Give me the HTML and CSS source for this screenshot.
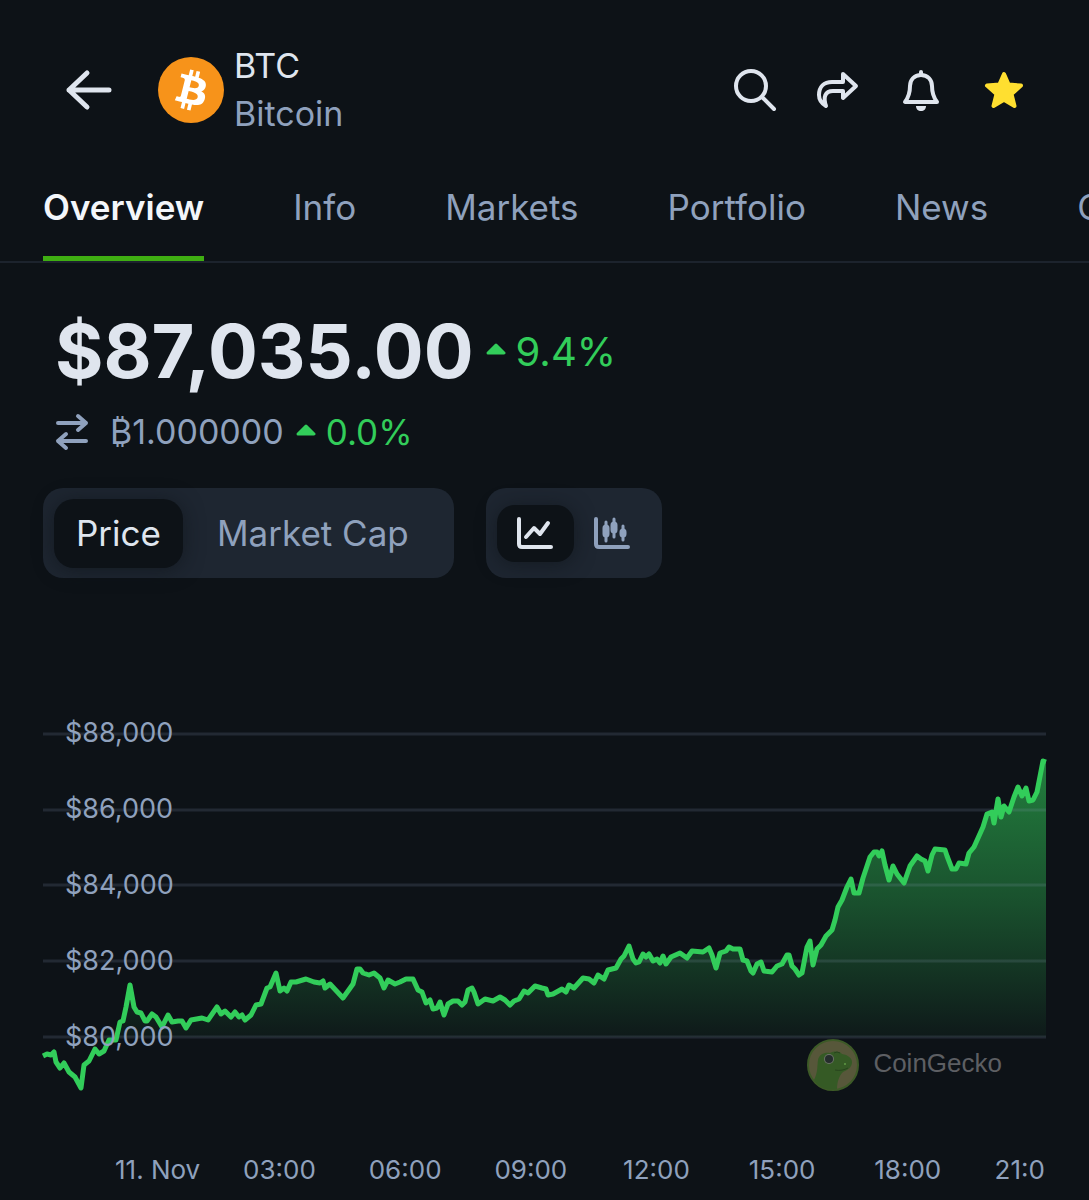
FILE: index.html
```html
<!DOCTYPE html>
<html lang="en">
<head>
<meta charset="utf-8">
<meta name="viewport" content="width=device-width, initial-scale=1">
<title>BTC – Bitcoin</title>
<link rel="stylesheet" href="styles.css">
</head>
<body>
<header class="topbar">
  <button class="icon-btn back" type="button" aria-label="Back">
    <svg width="48" height="44" viewBox="0 0 48 44" fill="none" stroke="currentColor" stroke-width="5" stroke-linecap="round" stroke-linejoin="round"><path d="M44 22H4M22 5 4 22l18 17"/></svg>
  </button>
  <svg class="coin-logo" viewBox="0 0 32 32" aria-hidden="true">
    <circle cx="16" cy="16" r="16" fill="#f7931a"/>
    <path fill="#fff" d="M23.189 14.02c.314-2.096-1.283-3.223-3.465-3.975l.708-2.84-1.728-.43-.69 2.765c-.454-.114-.92-.22-1.385-.326l.695-2.783L15.596 6l-.708 2.839c-.376-.086-.746-.17-1.104-.26l.002-.009-2.384-.595-.46 1.846s1.283.294 1.256.312c.7.175.826.638.805 1.006l-.806 3.235c.048.012.11.03.18.057l-.183-.045-1.13 4.532c-.086.212-.303.531-.793.41.018.025-1.256-.313-1.256-.313l-.858 1.978 2.25.561c.418.105.828.215 1.231.318l-.715 2.872 1.727.43.708-2.84c.472.127.93.245 1.378.357l-.706 2.828 1.728.43.715-2.866c2.948.558 5.164.333 6.097-2.333.752-2.146-.037-3.385-1.588-4.192 1.13-.26 1.98-1.003 2.207-2.538zm-3.95 5.538c-.533 2.147-4.148.986-5.32.695l.95-3.805c1.172.293 4.929.872 4.37 3.11zm.535-5.569c-.487 1.953-3.495.96-4.47.717l.86-3.45c.975.243 4.118.696 3.61 2.733z"/>
  </svg>
  <h1 class="coin-name"><span class="symbol">BTC</span><span class="name">Bitcoin</span></h1>
  <div class="actions">
    <button class="icon-btn" type="button" aria-label="Search">
      <svg width="44" height="44" viewBox="0 0 44 44" fill="none" stroke="currentColor" stroke-width="4" stroke-linecap="round"><circle cx="18" cy="18" r="15"/><path d="M30 30l11 11"/></svg>
    </button>
    <button class="icon-btn" type="button" aria-label="Share">
      <svg width="44" height="44" viewBox="0 0 44 44" fill="none" stroke="currentColor" stroke-width="4" stroke-linecap="round" stroke-linejoin="round"><path d="M27 6l13 12-13 12v-7H17C9 23 7 29 10 38 5 35 3 31 3 27c0-8 5-13 13-13h11z"/></svg>
    </button>
    <button class="icon-btn" type="button" aria-label="Alerts">
      <svg width="44" height="44" viewBox="0 0 44 44" fill="none" stroke="currentColor" stroke-width="4" stroke-linecap="round" stroke-linejoin="round"><path d="M22 4v3M22 7c-7 0-11 5-11 11 0 8-2 12-5 16h32c-3-4-5-8-5-16 0-6-4-11-11-11z"/><path d="M17 38h10c0 3-2 5-5 5s-5-2-5-5z" fill="currentColor" stroke="none"/></svg>
    </button>
    <button class="icon-btn star" type="button" aria-label="Remove from favorites" aria-pressed="true">
      <svg width="44" height="44" viewBox="0 0 44 44" fill="#ffdf30" stroke="#ffdf30" stroke-width="4" stroke-linejoin="round"><path d="M22 6l4.600 10.600 12.400 1-9.500 8.400 3 12L22 31.800 11.500 38l3-12L5 17.600l12.400-1z"/></svg>
    </button>
  </div>
</header>

<nav class="tabs" aria-label="Coin sections">
  <a class="tab active" href="#overview" aria-current="page">Overview</a>
  <a class="tab" href="#info">Info</a>
  <a class="tab" href="#markets">Markets</a>
  <a class="tab" href="#portfolio">Portfolio</a>
  <a class="tab" href="#news">News</a>
  <a class="tab" href="#charts">Charts</a>
</nav>

<main class="content" id="overview">
  <section class="quote">
    <div class="price-row">
      <span class="price">$87,035.00</span>
      <span class="change big"><svg class="caret" viewBox="0 0 20 14" aria-hidden="true"><path d="M10 3 18 11H2z"/></svg>9.4%</span>
    </div>
    <div class="convert-row">
      <svg class="swap" viewBox="0 0 34 38" fill="none" stroke="currentColor" stroke-width="4" stroke-linecap="round" stroke-linejoin="round" aria-hidden="true"><path d="M3 10h28M23 3l8 7-8 7M31 28H3M11 21l-8 7 8 7"/></svg>
      <span class="btc-price">₿1.000000</span>
      <span class="change"><svg class="caret" viewBox="0 0 20 14" aria-hidden="true"><path d="M10 3 18 11H2z"/></svg>0.0%</span>
    </div>
  </section>

  <div class="controls">
    <div class="segment" role="group" aria-label="Chart value">
      <button class="seg-btn selected" type="button" aria-pressed="true">Price</button>
      <button class="seg-btn wide" type="button" aria-pressed="false">Market Cap</button>
    </div>
    <div class="segment" role="group" aria-label="Chart type">
      <button class="type-btn selected" type="button" aria-label="Line chart" aria-pressed="true">
        <svg width="38" height="34" viewBox="0 0 38 34" fill="none" stroke="currentColor" stroke-width="4" stroke-linecap="round" stroke-linejoin="round"><path d="M3 3v25q0 3 3 3h29M10 21l8-9 6 6 8-11"/></svg>
      </button>
      <button class="type-btn" type="button" aria-label="Candlestick chart" aria-pressed="false">
        <svg width="38" height="34" viewBox="0 0 38 34" fill="none" stroke="currentColor" stroke-width="4" stroke-linecap="round" stroke-linejoin="round"><path d="M3 3v25q0 3 3 3h29"/><path stroke-width="3" d="M13 6v19M21 3v18M30 10v14"/><path stroke-width="7" d="M13 12v6M21 9v5M30 16v2"/></svg>
      </button>
    </div>
  </div>

  <figure class="chart">
    <svg class="plot" viewBox="43 734 1003 360" preserveAspectRatio="none" role="img" aria-label="Bitcoin price over the last 24 hours">
      <defs>
        <linearGradient id="fade" gradientUnits="userSpaceOnUse" x1="0" y1="760" x2="0" y2="1037">
          <stop offset="0" stop-color="#32cd5a" stop-opacity=".58"/>
          <stop offset=".5" stop-color="#32cd5a" stop-opacity=".34"/>
          <stop offset="1" stop-color="#32cd5a" stop-opacity=".04"/>
        </linearGradient>
      </defs>
      <path fill="url(#fade)" d="M43 1037L116 1037 120 1022 123 1021 126 1007 130 985 134 1007 137 1012 141 1013 145 1021 147 1021 152 1014 156 1017 162 1027 168 1015 172 1022 178 1021 182 1021 186 1028 191 1020 202 1018 208 1020 217 1007 221 1014 225 1011 231 1017 235 1012 239 1017 242 1015 245 1020 251 1015 256 1005 261 1004 267 988 270 987 276 973 280 991 284 988 287 991 291 982 296 982 306 979 314 982 320 983 323 981 325 988 330 984 343 998 353 984 357 969 360 969 363 973 369 975 374 973 380 978 384 988 388 980 395 984 400 982 406 979 413 979 418 990 422 992 426 1003 430 1000 433 1009 437 1008 440 1002 444 1015 448 1004 453 1001 458 1001 462 1005 465 1002 468 990 472 988 474 992 478 1004 485 999 493 1001 500 997 505 1000 510 1005 514 1001 519 999 524 991 528 993 535 986 542 988 546 989 548 995 553 994 562 989 566 992 569 985 574 988 583 978 589 979 594 983 598 975 604 979 608 970 616 968 621 959 624 956 629 946 633 959 636 963 639 962 643 954 646 957 649 954 653 961 657 959 660 963 663 956 666 964 671 957 680 953 687 958 692 951 703 952 709 948 712 955 716 968 720 953 726 951 729 947 733 949 740 949 743 960 747 961 751 971 753 973 757 964 761 962 764 971 772 972 777 966 782 964 787 955 789 955 792 966 795 969 799 975 802 973 807 947 810 941 813 965 817 949 821 945 826 936 832 930 835 920 838 907 842 900 847 887 851 879 854 893 859 893 863 878 870 857 874 852 877 852 879 856 882 851 885 865 889 880 893 866 897 874 904 883 910 866 917 856 921 859 925 861 928 871 932 855 935 849 945 850 947 856 952 869 956 869 959 863 966 864 969 853 974 847 983 827 987 814 992 812 994 823 998 799 1001 817 1004 806 1009 812 1014 797 1018 787 1022 796 1026 788 1029 801 1033 800 1037 792 1043 761 1046 762V1037z"/>
      <path class="gridline" d="M43 734H1046M43 810H1046M43 885H1046M43 961H1046M43 1037H1046"/>
      <path class="line" d="M43 1056L47 1054 51 1055 54 1052 56 1062 60 1068 64 1063 69 1072 75 1077 81 1088 84 1065 89 1061 95 1049 99 1054 104 1051 109 1040 116 1040 120 1022 123 1021 126 1007 130 985 134 1007 137 1012 141 1013 145 1021 147 1021 152 1014 156 1017 162 1027 168 1015 172 1022 178 1021 182 1021 186 1028 191 1020 202 1018 208 1020 217 1007 221 1014 225 1011 231 1017 235 1012 239 1017 242 1015 245 1020 251 1015 256 1005 261 1004 267 988 270 987 276 973 280 991 284 988 287 991 291 982 296 982 306 979 314 982 320 983 323 981 325 988 330 984 343 998 353 984 357 969 360 969 363 973 369 975 374 973 380 978 384 988 388 980 395 984 400 982 406 979 413 979 418 990 422 992 426 1003 430 1000 433 1009 437 1008 440 1002 444 1015 448 1004 453 1001 458 1001 462 1005 465 1002 468 990 472 988 474 992 478 1004 485 999 493 1001 500 997 505 1000 510 1005 514 1001 519 999 524 991 528 993 535 986 542 988 546 989 548 995 553 994 562 989 566 992 569 985 574 988 583 978 589 979 594 983 598 975 604 979 608 970 616 968 621 959 624 956 629 946 633 959 636 963 639 962 643 954 646 957 649 954 653 961 657 959 660 963 663 956 666 964 671 957 680 953 687 958 692 951 703 952 709 948 712 955 716 968 720 953 726 951 729 947 733 949 740 949 743 960 747 961 751 971 753 973 757 964 761 962 764 971 772 972 777 966 782 964 787 955 789 955 792 966 795 969 799 975 802 973 807 947 810 941 813 965 817 949 821 945 826 936 832 930 835 920 838 907 842 900 847 887 851 879 854 893 859 893 863 878 870 857 874 852 877 852 879 856 882 851 885 865 889 880 893 866 897 874 904 883 910 866 917 856 921 859 925 861 928 871 932 855 935 849 945 850 947 856 952 869 956 869 959 863 966 864 969 853 974 847 983 827 987 814 992 812 994 823 998 799 1001 817 1004 806 1009 812 1014 797 1018 787 1022 796 1026 788 1029 801 1033 800 1037 792 1043 761 1046 762"/>
    </svg>
    <ol class="y-axis">
      <li>$88,000</li>
      <li>$86,000</li>
      <li>$84,000</li>
      <li>$82,000</li>
      <li>$80,000</li>
    </ol>
    <div class="watermark">
      <svg class="gecko" viewBox="0 0 52 52" aria-hidden="true">
        <circle cx="26" cy="26" r="25" fill="#57573a" stroke="#3d5a27" stroke-width="2"/>
        <path fill="#355a25" d="M7 41C11 33 10 28 11 21c1-6 7-8 12-7 5-2 9-2 12 1 6 1 10 4 10 8 0 6-5 8-9 10-4 4-6 10-6 17-9 2-18-1-23-9z"/>
        <path fill="none" stroke="#27441d" stroke-width="1" d="M28 31c5 1 9 0 13-2M27 14q3-2 6 0"/>
        <circle cx="22" cy="20" r="5" fill="#6b7068"/><circle cx="22" cy="20" r="4" fill="#252d2c"/>
        <circle cx="38" cy="25" r="1" fill="#5f9a45"/>
      </svg>
      <span>CoinGecko</span>
    </div>
  </figure>
  <ol class="x-axis">
    <li>11. Nov</li>
    <li>03:00</li>
    <li>06:00</li>
    <li>09:00</li>
    <li>12:00</li>
    <li>15:00</li>
    <li>18:00</li>
    <li>21:0</li>
  </ol>
</main>
</body>
</html>
```
FILE: styles.css
```css
:root {
  --bg: #0d1217;
  --panel: #1e2631;
  --text: #dfe5ee;
  --muted: #8fa1bd;
  --green: #32cd5a;
}

* { box-sizing: border-box; }

body {
  margin: 0;
  background: var(--bg);
  color: var(--text);
  font-family: Inter, "Noto Sans", sans-serif;
  font-size: 35px;
  overflow-x: hidden;
}

button {
  border: 0;
  padding: 0;
  background: none;
  color: inherit;
  font: inherit;
  cursor: pointer;
}

svg { display: block; flex: none; }

ol { list-style: none; margin: 0; padding: 0; }

.topbar {
  display: flex;
  align-items: center;
  padding: 42px 63px 0 65px;
}

.coin-logo {
  width: 66px;
  height: 66px;
  margin: 0 10px 0 45px;
}

.coin-name {
  display: flex;
  flex-direction: column;
  margin: 0;
  font-size: 34px;
  line-height: 48px;
  font-weight: 400;
}

.name { color: var(--muted); }

.actions {
  display: flex;
  gap: 39px;
  margin-left: auto;
}

.tabs {
  display: flex;
  gap: 89px;
  height: 125px;
  padding: 0 43px;
  border-bottom: 2px solid #1c232d;
  overflow: hidden;
}

.tab {
  flex: none;
  padding-top: 47px;
  line-height: 44px;
  color: var(--muted);
  text-decoration: none;
  border-bottom: 5px solid transparent;
}

.tab.active {
  color: #f3f6fa;
  font-weight: 600;
  border-bottom-color: #3fae12;
}

.content { padding: 0 43px; }

.quote { padding: 43px 12px 0; }

.price-row,
.convert-row,
.change {
  display: flex;
  align-items: center;
}

.price-row { gap: 12px; }

.price {
  font-size: 74px;
  line-height: 90px;
  font-weight: 700;
}

.convert-row {
  padding-top: 14px;
  line-height: 44px;
  color: var(--muted);
}

.swap {
  width: 34px;
  height: 38px;
  margin-right: 21px;
}

.btc-price { margin-right: 12px; font-size: 34px; }

.change { gap: 10px; color: var(--green); }

.big { font-size: 40px; }

.caret {
  width: 20px;
  height: 14px;
  margin-bottom: 4px;
  fill: var(--green);
  stroke: var(--green);
  stroke-width: 3;
  stroke-linejoin: round;
}

.controls {
  display: flex;
  gap: 32px;
  padding-top: 34px;
}

.segment {
  display: flex;
  align-items: center;
  height: 90px;
  padding: 0 11px;
  border-radius: 20px;
  background: var(--panel);
  color: var(--muted);
}

.seg-btn {
  height: 69px;
  padding: 0 22px;
  border-radius: 20px;
}

.wide { padding: 0 34px; }

.type-btn {
  display: grid;
  place-items: center;
  width: 77px;
  height: 57px;
  border-radius: 18px;
}

.selected {
  background: var(--bg);
  color: var(--text);
  box-shadow: 0 2px 20px rgba(13, 18, 23, .6);
}

.chart {
  display: grid;
  margin: 156px 0 0;
}

.plot,
.y-axis,
.watermark { grid-area: 1 / 1; }

.plot { width: 100%; height: 360px; overflow: visible; }

.gridline {
  fill: none;
  stroke: #8fa1bd;
  stroke-opacity: .17;
  stroke-width: 3;
}

.line {
  fill: none;
  stroke: var(--green);
  stroke-width: 5;
  stroke-linejoin: round;
  vector-effect: non-scaling-stroke;
}

.y-axis {
  margin-top: -20px;
  padding-left: 22px;
  font-size: 27px;
  line-height: 38px;
  color: var(--muted);
}

.y-axis li { height: 76px; }

.watermark {
  display: flex;
  align-items: center;
  align-self: end;
  justify-self: end;
  gap: 14px;
  margin: 0 44px 3px 0;
  font-family: "Liberation Sans", Arial, sans-serif;
  font-size: 26px;
  line-height: 26px;
  color: #5d5f63;
}

.watermark span { padding-bottom: 4px; }

.gecko { width: 52px; height: 52px; }

.x-axis {
  display: flex;
  margin-top: 57px;
  padding-left: 48px;
  overflow: hidden;
  font-size: 26px;
  line-height: 38px;
  color: var(--muted);
  white-space: nowrap;
}

.x-axis li { flex: 0 0 calc(100% / 7.6); text-align: center; }

.x-axis li:first-child,
.x-axis li:last-child { padding-left: 24px; text-align: left; }
```
